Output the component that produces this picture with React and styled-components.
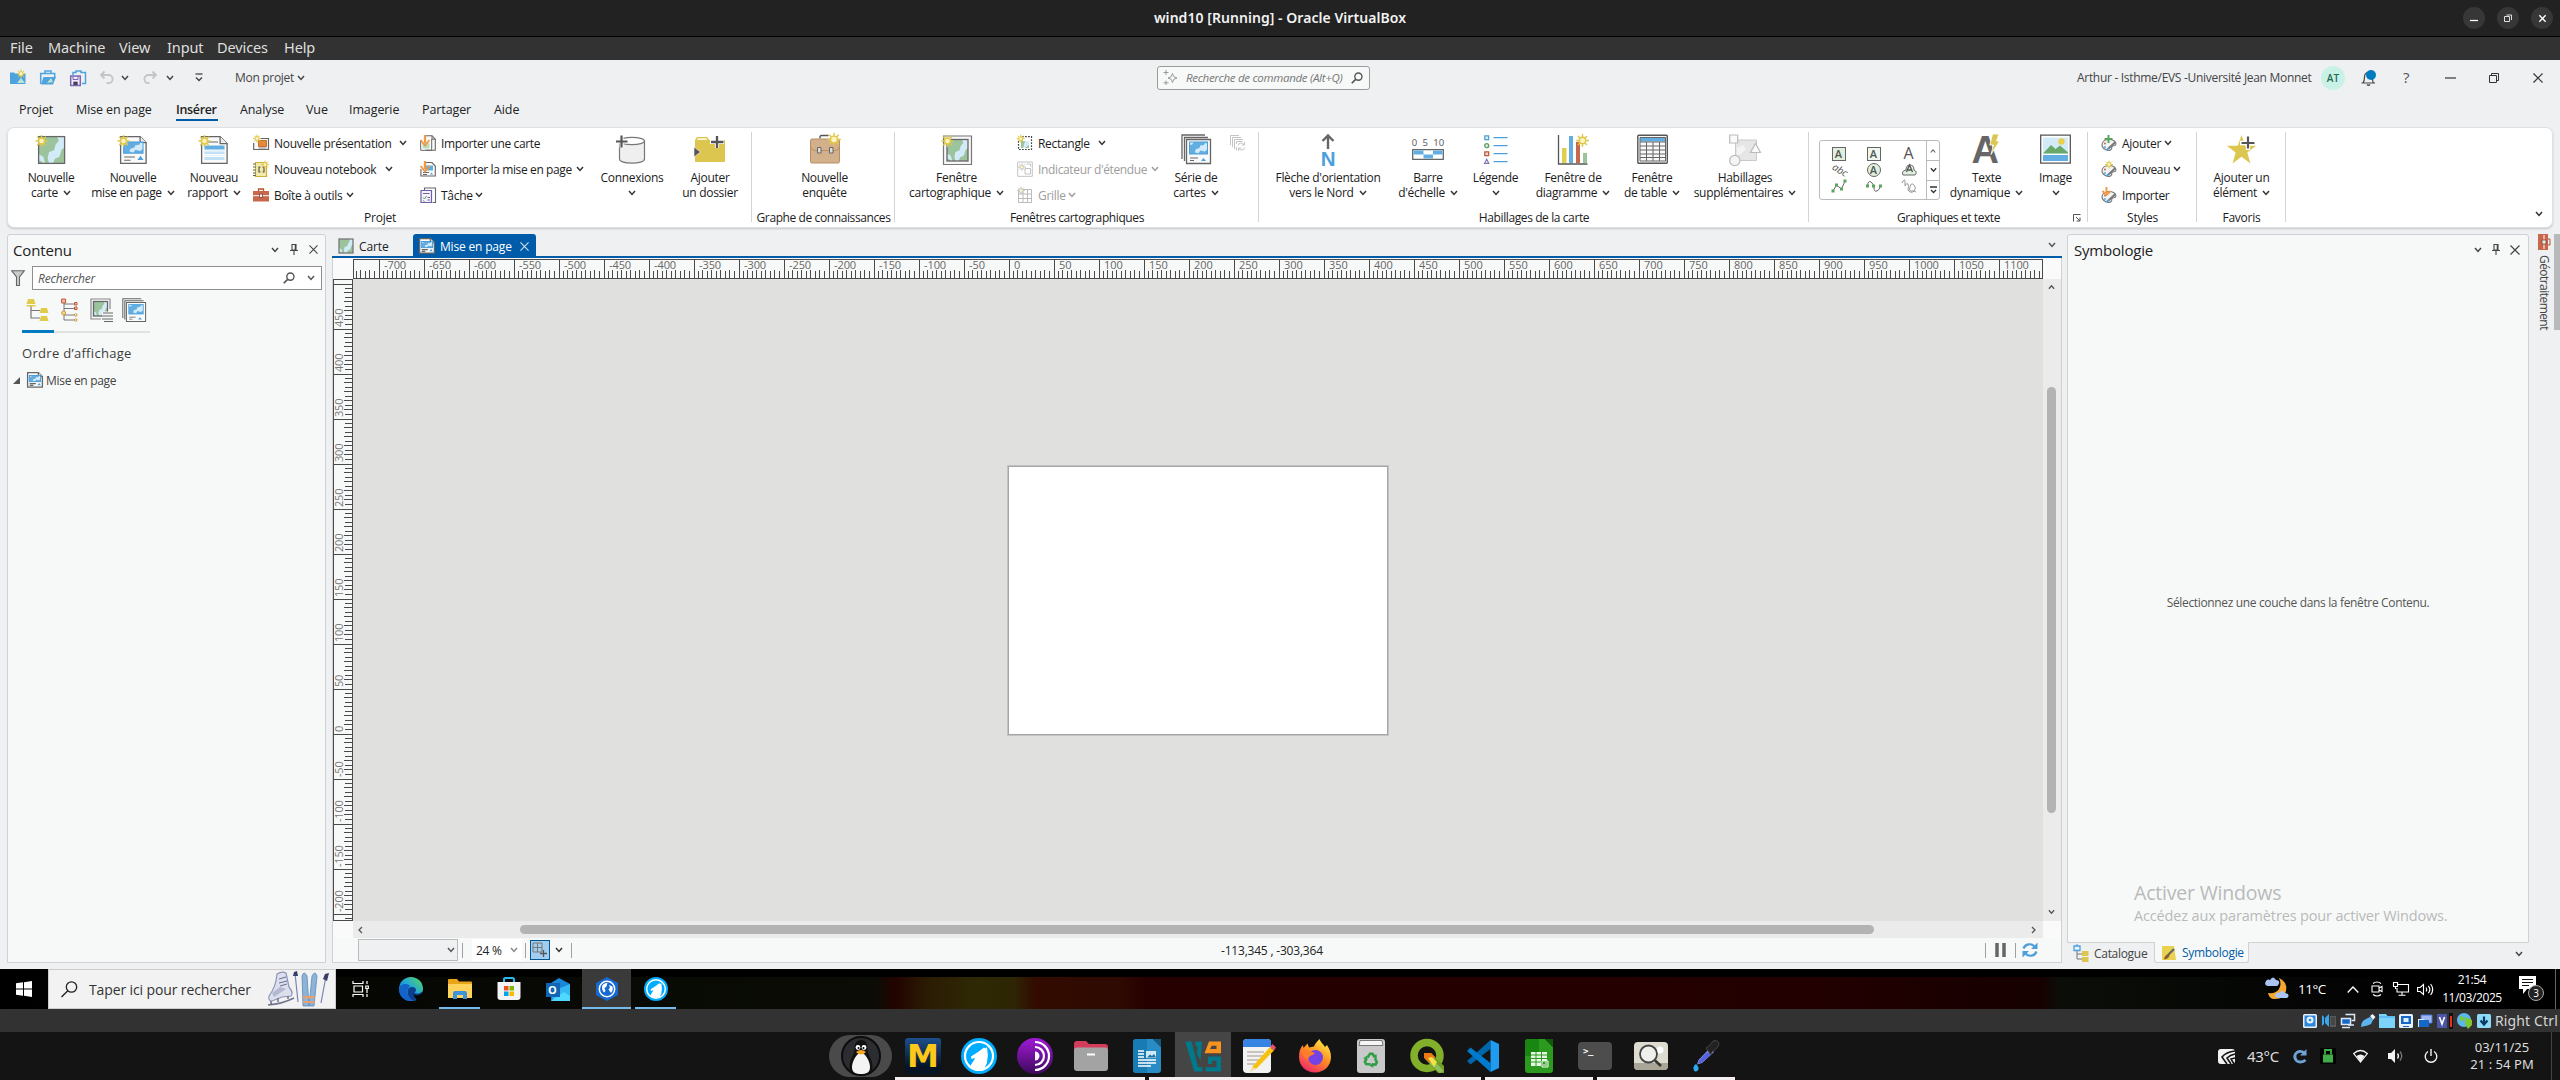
import React from "react";
import styled, { createGlobalStyle } from "styled-components";

const Global = createGlobalStyle`
  * { box-sizing: border-box; }
  body { margin: 0; background: #141414; }
  svg { display: block; flex: none; overflow: visible; }
`;

const ui = `"Open Sans", "Noto Sans", sans-serif`;
const host = `"Noto Sans", "Open Sans", sans-serif`;

/* ---------- shared ---------- */
const Screen = styled.div`
  width: 2560px; height: 1080px; overflow: hidden;
  display: flex; flex-direction: column;
  font-family: ${ui}; font-size: 12px; line-height: 15px; color: #222;
  background: #eef0f2; white-space: nowrap;
`;
const Spacer = styled.div`flex: 1;`;
const Slot = styled.div`
  display: flex; align-items: center; justify-content: center;
  flex: none; width: ${p => p.$w}px; margin-left: ${p => p.$ml || 0}px;
`;
const Label = styled.span`
  flex: none; display: inline-block;
  width: ${p => p.$w ? p.$w + "px" : "auto"};
  margin-left: ${p => p.$ml || 0}px;
  letter-spacing: ${p => p.$ls ?? -0.3}px;
  font-size: ${p => p.$size || 12}px;
  color: ${p => p.$c || "inherit"};
  font-style: ${p => p.$i ? "italic" : "normal"};
`;
const Svg = ({ w = 16, h = w, vb, children }) => (
  <svg width={w} height={h} viewBox={vb || `0 0 ${w} ${h}`} fill="none">{children}</svg>
);
const Chev = ({ c = "#333", up, w = 8 }) => (
  <Svg w={w} h={6} vb="0 0 8 6"><path d={up ? "M1 5l3-3.4L7 5" : "M1 1l3 3.4L7 1"} stroke={c} strokeWidth="1.5" /></Svg>
);
const Close = ({ s = 10, c = "#333", k = 1.2 }) => (
  <Svg w={s} vb="0 0 10 10"><path d="M.5.5l9 9M9.5.5l-9 9" stroke={c} strokeWidth={k} /></Svg>
);
const Pin = () => (
  <Svg w={8} h={11}><path d="M2 .5h4v5.500H2zM0 6.500h8M4 6.500V11M5.300 1v5" stroke="#444" strokeWidth="1.1" /></Svg>
);
const Glass = ({ s = 13, c = "#555" }) => (
  <Svg w={s} vb="0 0 13 13"><circle cx="8" cy="5" r="3.9" stroke={c} strokeWidth="1.5" /><path d="M5 8L.8 12.200" stroke={c} strokeWidth="1.8" /></Svg>
);

/* ---------- icon parts ---------- */
const Sun = ({ x = 5.5, y = 7, r = 3, c = "#e0c84a" }) => (
  <g stroke={c} strokeWidth={r > 2.5 ? 1.4 : 1}>
    <path d={[0, 45, 90, 135].map(a => {
      const t = a * Math.PI / 180, R = r * 2, dx = Math.cos(t) * R, dy = Math.sin(t) * R;
      return `M${x - dx} ${y - dy}L${x + dx} ${y + dy}`;
    }).join("")} />
    <circle cx={x} cy={y} r={r} fill="#fbf3c0" />
  </g>
);
const Land = ({ x, y, w, h, a = "#9cc49c", b = "#d3eaf9", s = "#666" }) => (
  <g>
    <rect x={x} y={y} width={w} height={h} fill={b} />
    <path transform={`translate(${x} ${y}) scale(${w / 10} ${h / 10})`} fill={a} d="M0 0h7l.8 1.500-1.300 1.500-.5 2-2 .8L3.500 8 4 10H2.500L1.800 7.500 0 6.500zM10 4v6H5.500l.8-1.700L8 7.500l.8-2.500zM0 8.800l1.500.6V10H0z" />
    {s && <rect x={x} y={y} width={w} height={h} stroke={s} strokeWidth="1.3" />}
  </g>
);
const Sheet = ({ x = 0, y = 0, w, h, c = 5 }) => (
  <g stroke="#666" strokeWidth="1.3"><path fill="#fafafa" d={`M${x} ${y}h${w - c}l${c} ${c}v${h - c}h${-w}z`} /><path d={`M${x + w - c} ${y}v${c}h${c}`} fill="#eee" /></g>
);
const Sea = ({ x, y, w, h }) => (
  <g><rect x={x} y={y} width={w} height={h} fill="#62aee2" />
    <path transform={`translate(${x} ${y}) scale(${w / 10} ${h / 10})`} fill="#d3eaf9" d="M0 0h2.500L1.500 2 0 2.500zM10 1v5L8.500 8 6 7 5 9.500 3 8.500 3.500 6l2-1L6 3l2-.5L8.500 1z" />
    <rect x={x} y={y} width={w} height={h} stroke="#4d9fdb" /></g>
);
const LayoutArt = ({ x, y, w, h, c }) => (
  <g>
    <Sheet x={x} y={y} w={w} h={h} c={c} />
    <Sea x={x + w * .12} y={y + h * .2} w={w * .76} h={h * .42} />
    <path d={`M${x + w * .14} ${y + h * .76}h${w * .42}M${x + w * .14} ${y + h * .88}h${w * .25}`} stroke="#666" strokeWidth="1.1" />
    <path d={`M${x + w * .66} ${y + h * .87}h${w * .24}l${-w * .12} ${-h * .16}z`} fill="#4d9fdb" />
  </g>
);

const IMapNew = () => <Svg w={30}><Land x={2.600} y={2.600} w={26} h={26.800} /><Sun /></Svg>;
const ILayoutNew = () => <Svg w={30}><LayoutArt x={2.600} y={2.600} w={25.500} h={26.800} c={6} /><Sun /></Svg>;
const IReportNew = () => (
  <Svg w={30}><Sheet x={2.6} y={2.6} w={25.500} h={26.800} c={7} />
    <path d="M9 8h10" stroke="#666" strokeWidth="1" />
    <path d="M5.500 11.500h20v4h-20z" fill="#62aee2" /><path d="M5.500 17.500h20v2.500h-20zM5.500 23h20v3h-20z" fill="#bfe0f5" /><path d="M5.500 16.500h20M5.500 21.500h20" stroke="#e8f4fb" />
    <Sun /></Svg>
);
const IConn = () => (
  <Svg w={32} h={30}><path d="M3.500 7v18c0 5.500 25 5.500 25 0V7" fill="#efefef" stroke="#777" strokeWidth="1.200" /><ellipse cx="16" cy="7" rx="12.500" ry="3.700" fill="#fff" stroke="#777" strokeWidth="1.200" />
    <path d="M5.500 1.500v12M0 7.500h11.500" stroke="#fff" strokeWidth="4" /><path d="M5.500 1.500v12M0 7.500h11.500" stroke="#555" strokeWidth="2.200" /></Svg>
);
const IFolderAdd = () => (
  <Svg w={32} h={30}><path d="M1 6l2-3h10l2.500 3H31v22H1z" fill="#dcc64f" /><path d="M3 6l1-1.700h8L13.500 6z" fill="#fdf8dc" /><path d="M0 13l6.500 5L0 23z" fill="#555" stroke="#fff" strokeWidth=".6" />
    <path d="M23 0v14M16 8h14" stroke="#fff" strokeWidth="4" /><path d="M23 2v12M17 8h12.500" stroke="#555" strokeWidth="2.300" /></Svg>
);
const IBag = () => (
  <Svg w={32} h={30}><path d="M11 4.500V3q0-1.500 1.500-1.500h7" stroke="#555" strokeWidth="1.400" /><rect x="1.500" y="5" width="29" height="24" rx="1.500" fill="#d3b08c" stroke="#b98e60" /><path d="M1.500 12q1 4.500 5 4.500h19q4 0 5-4.500" stroke="#b98e60" /><path d="M8.500 13.500h3.500v5.500H8.500zM20.500 13.500H24v5.500h-3.500z" fill="#ddd" stroke="#666" /><Sun x={25} y={5.500} r={3.400} /></Svg>
);
const IMapFrame = () => <Svg w={31} h={32}><path d="M2.500 2h28v28.500h-28z" fill="#f7f7f7" stroke="#777" strokeWidth="1.200" /><Land x={6} y={5.500} w={21} h={21.500} /><Sun x={6.500} y={7} /></Svg>;
const ISeries = ({ s = 30 }) => (
  <Svg w={s} vb="0 0 30 30"><path d="M1 25V1h23M3.500 27V3.500H27" stroke="#666" strokeWidth="1.300" /><path d="M5.500 5.500h24v24h-24z" fill="#fafafa" stroke="#666" strokeWidth="1.300" /><Sea x={8.500} y={8} w={18} h={12} /><path d="M9 24h8M9 26.500h4" stroke="#666" /><path d="M20 27h5l-2.500-3z" fill="#4d9fdb" /></Svg>
);
const ISeriesRefresh = () => (
  <Svg w={16}><path d="M.5 10V.5H9M2.500 12V2.500H11M4.500 14V4.500H13M6.500 9V6.500h6M6.500 12v3.500" stroke="#c4c4c4" /><path d="M8 10.500a3.400 3.400 0 016-1M15 12.500a3.400 3.400 0 01-6 1M14.500 7v3h-3M8.500 16v-3h3" stroke="#c4c4c4" /></Svg>
);
const North = styled.div`
  display: flex; flex-direction: column; align-items: center; height: 30px;
  color: #4d9fdb; font: 700 20.5px/19px "Liberation Sans", sans-serif;
`;
const INorth = () => <North><Svg w={14} h={15}><path d="M7 2v13M1.500 7L7 1.500 12.500 7" stroke="#666" strokeWidth="2.400" /></Svg>N</North>;
const Scale = styled.div`
  width: 34px; height: 30px; padding-top: 3px; display: flex; flex-direction: column; align-items: center;
  font: 9.5px/12px ${ui}; color: #555; letter-spacing: .1px;
`;
const IScale = () => <Scale><span>0&nbsp; 5 &nbsp;10</span><Svg w={32} h={11}><path d="M.7.7h30.600v9.600H.7z" fill="#fff" stroke="#666" strokeWidth="1.300" /><path d="M1.500 1.500h10v4h-10zM21 1.500h9.500v4H21zM11.500 5.500H21v4h-9.500z" fill="#62aee2" /></Svg></Scale>;
const ILegend = () => (
  <Svg w={24} h={30}><path d="M.8 1.800h3.800v3.800H.8z" stroke="#4d9fdb" strokeWidth="1.300" fill="#dff0fb" /><circle cx="2.700" cy="11.700" r="2" stroke="#5f9e62" strokeWidth="1.300" fill="#d8efd8" /><path d="M.8 17.800h3.800v3.800H.8z" stroke="#c0573b" strokeWidth="1.300" fill="#f8ded6" /><path d="M2.700 25.200L.6 29.300h4.200z" stroke="#8470b8" strokeWidth="1.200" /><path d="M9.500 3.700h14M9.500 11.700h14M9.500 19.700h14M9.500 27.700h14" stroke="#4d9fdb" strokeWidth="1.300" /></Svg>
);
const IChart = () => (
  <Svg w={32} h={31}><path d="M1.500 1v29h29" stroke="#555" strokeWidth="1.300" /><path d="M5 14h4.500v15H5z" fill="#e0cf4e" /><path d="M12 2h4v27h-4z" fill="#62aee2" /><path d="M19 8h4v21h-4z" fill="#c8674a" /><path d="M26 19h4v10h-4z" fill="#9cc49c" /><Sun x={25.500} y={6.500} r={3.200} /></Svg>
);
const ITable = () => (
  <Svg w={31} h={30}><rect x=".8" y="1.300" width="29.500" height="28" rx="1" fill="#fafafa" stroke="#555" strokeWidth="1.400" /><path d="M3 3.500h25.500v4H3z" fill="#62aee2" /><path d="M3 3.500h25.500v23.500H3zM3 8h25.500M3 12h25.500M3 16h25.500M3 20h25.500M3 23.500h25.500M9.500 8v19M16 8v19M22.500 8v19" stroke="#666" /></Svg>
);
const IExtras = () => (
  <Svg w={32} h={32}><path d="M6.500 6h21v20.500h-21z" fill="#e6e6e6" stroke="#c9c9c9" /><path d="M8 14l6-3 3 4-5 5-4 1z" fill="#f4f4f4" /><path d="M.7 1h8v8h-8zM26.500 9.500l5 9h-10z" fill="#fafafa" stroke="#bbb" strokeWidth="1.200" /><circle cx="5.800" cy="26.500" r="5.200" fill="#f4f4f4" stroke="#bbb" strokeWidth="1.200" /></Svg>
);
const BigA = styled.div`
  display: flex; align-items: flex-start; width: 30px; height: 30px; color: #666;
  font: 700 38px/32px "Liberation Sans", sans-serif; letter-spacing: -3px;
  svg { margin-left: -7px; }
`;
const IDynText = () => <BigA>A<Svg w={11} h={21}><path d="M3.500 0H10L7.500 7h3L2 20.500 4.500 11H.8z" fill="#dcc64f" stroke="#fff" strokeWidth=".8" /></Svg></BigA>;
const IImage = () => (
  <Svg w={31} h={30}><path d="M.7 1.200h29.600v28H.7z" fill="#fff" stroke="#555" strokeWidth="1.300" /><path d="M3 3.500h25v16H3z" fill="#d3eaf9" /><path d="M3 19.500L11 11l4.500 4L20 11.500l8 7v1z" fill="#68a86b" /><path d="M3 21h25v6H3z" fill="#62aee2" /><circle cx="21.500" cy="7.500" r="3.200" fill="#e8d04c" /></Svg>
);
const IStar = () => (
  <Svg w={32} h={31}><path d="M15.500 1l3.700 10.800h11l-8.900 6.800 3.200 11-9-6.800-9 6.800 3.200-11L.8 11.800h11z" fill="#dcc64f" /><path d="M22 1.500V16M14 9h15" stroke="#fff" strokeWidth="4.400" /><path d="M22 2.500v12M15.500 9h13" stroke="#555" strokeWidth="2.200" /></Svg>
);

/* small 16px icons */
const ISlides = () => <Svg><path d="M2 3.500h13.500v11H.7V8" stroke="#666" strokeWidth="1.200" fill="#fafafa" /><path d="M5.500 5.500h8v6h-8z" fill="#e38a3b" stroke="#c9702a" /><path d="M5.500 13h8" stroke="#888" /><Sun x={4} y={3.500} r={2} /></Svg>;
const INotebook = () => <Svg><path d="M2.500 1.500h11V15.500h-11z" fill="#f4ebaa" stroke="#c9b23c" strokeWidth="1.200" /><path d="M0 3h3M0 6h3M0 9h3M0 12h3M0 14.500h3" stroke="#666" /><path d="M7.500 6H6v5h1.500M9.500 6H11v5H9.500" stroke="#555" strokeWidth="1.200" /><Sun x={12} y={3.500} r={2} /></Svg>;
const IToolbox = () => <Svg><path d="M5.500 4V2h5v2" stroke="#b5532f" strokeWidth="1.300" /><path d="M0 4h16v10.500H0z" fill="#c8674a" /><path d="M0 8.700h16" stroke="#fff" /><path d="M6.500 7h3v3.500h-3z" fill="#eee" stroke="#6a3322" strokeWidth=".7" /></Svg>;
const OrangeDown = () => <><path d="M5 0v8" stroke="#ee9a48" strokeWidth="2.300" /><path d="M.6 5L5 10.500 9.400 5" stroke="#ee9a48" strokeWidth="1.800" /></>;
const IImportMap = () => <Svg><path d="M6 .7h6l3.300 3.500v11H5.500" stroke="#666" strokeWidth="1.100" fill="#fafafa" /><path d="M12 .7v3.500h3.300M.7 5v10.300h11V4" stroke="#666" /><path d="M2.500 8h7v5.500h-7z" fill="#b9dcc0" /><OrangeDown /></Svg>;
const IImportLayout = () => <Svg><path d="M4 1.500h8l3.300 3.500v10H.9V8" stroke="#666" strokeWidth="1.100" fill="#fafafa" /><path d="M5 4.500h8v5H5z" fill="#62aee2" /><path d="M3 11.500h6M3 13.500h4" stroke="#666" /><path d="M10 13.500h3l-1.500-2z" fill="#4d9fdb" /><OrangeDown /></Svg>;
const ITask = () => <Svg><path d="M4.500 3V1h11v14.500h-3" stroke="#666" strokeWidth="1.100" /><path d="M1 3.500h10.500v12H1z" fill="#f4f1fa" stroke="#6f5fa5" strokeWidth="1.200" /><path d="M3 6.500h6.500" stroke="#6f5fa5" /><path d="M3 10.500l1.500 1.500 2-3M3 13.500l1.500 1" stroke="#5aa45e" /><path d="M7.500 10.500h2.500M7.500 13h2.500" stroke="#6f5fa5" /></Svg>;
const IRect = () => <Svg><path d="M5 1.700h9.500v12.800H1.500V6" stroke="#444" strokeWidth="1.200" strokeDasharray="1.800 1.200" /><path d="M4 6h8v7H4z" fill="#9cc49c" /><path d="M8 6h4v4l-4 3H6z" fill="#d3eaf9" /><Sun x={3.700} y={3.700} r={2} /></Svg>;
const IExtent = () => <Svg><path d="M.7 1h14.600v14.300H.7z" stroke="#c2c2c2" /><path d="M8 7.500h5.500V13H8zM9.500 3h4v2.500" stroke="#c2c2c2" /><Sun x={5} y={6} r={2} c="#ccc" /></Svg>;
const IGrid = () => <Svg><path d="M1.500 2.500h13v13H1.500zM1.500 7h13M1.500 11.500h13M6 3v12.500M10.500 3v12.500" stroke="#bbb" /><Sun x={4} y={3.500} r={2} c="#ccc" /></Svg>;
const Palette = ({ children }) => <Svg><path d="M1 10C1 6.500 4 4.500 8 4.500s7 2 7 4.500-3 1-4 2.500 1 2-1.500 3.500S1 14 1 10z" fill="#f3f3f3" stroke="#777" strokeWidth="1.100" /><path d="M14.500 7l-7 6.500" stroke="#777" strokeWidth="2" /><path d="M8 13l-2.500 2" stroke="#4d9fdb" strokeWidth="2" /><circle cx="4" cy="8.500" r="1" fill="#c8674a" /><circle cx="4" cy="12" r="1" fill="#62aee2" />{children}</Svg>;
const IPalAdd = () => <Palette><path d="M7.500 0v8M3.500 4h8" stroke="#5aa45e" strokeWidth="2" /></Palette>;
const IPalNew = () => <Palette><Sun x={8} y={3.500} r={2} /></Palette>;
const IPalImp = () => <Palette><path d="M5.500 0v7M1.500 4l4 4 4-4" stroke="#ee9a48" strokeWidth="1.900" /></Palette>;

/* ---------- host title + menu ---------- */
const TitleBar = styled.div`
  height: 37px; background: #222; border-bottom: 1px solid #000; flex: none;
  display: grid; grid-template-columns: 1fr auto 1fr; align-items: center;
  color: #f2f2f2; font: 600 14px/20px ${host};
`;
const WinBtns = styled.div`display: flex; justify-content: flex-end; gap: 12px; padding-right: 7px;`;
const WinBtn = styled.div`
  width: 22px; height: 22px; border-radius: 50%; background: #373737;
  display: flex; align-items: center; justify-content: center;
`;
const MenuBar = styled.div`
  height: 23px; background: #323232; flex: none; display: flex; align-items: center;
  padding: 0 0 3px 10px; color: #dfdfdf; font: 14.500px/20px ${host};
`;

/* ---------- application header ---------- */
const QuickBar = styled.div`height: 35px; display: flex; align-items: center; flex: none; padding-left: 10px; color: #444;`;
const Search = styled.div`
  width: 213px; height: 24px; border: 1px solid #9b9b9b; border-radius: 3px; background: #f7f9f8;
  display: flex; align-items: center; flex: none; color: #777; margin-left: ${p => p.$ml}px; padding: 0 6px 0 5px;
`;
const Avatar = styled.div`
  width: 24px; height: 24px; border-radius: 50%; background: #caf1e5; color: #1e6b56; font: 600 10px/24px ${ui}; text-align: center; margin-left: 8px;
`;
const TabsRow = styled.div`height: 28px; display: flex; align-items: flex-start; flex: none; padding-left: 19px; font-size: 12.500px;`;
const RTab = styled.div`
  width: ${p => p.$w}px; margin-right: ${p => p.$mr || 0}px; flex: none; height: 26px; line-height: 30px;
  font-weight: ${p => p.$on ? 600 : 400}; letter-spacing: ${p => p.$ls ?? -0.1}px;
  border-bottom: 2px solid ${p => p.$on ? "#005ca9" : "transparent"};
`;
const Ribbon = styled.div`
  height: 101px; margin: 4px 7px 6px 7px; background: #fff; border: 1px solid #dfe1e3; border-radius: 7px; flex: none;
  box-shadow: 0 1px 2px rgba(0,0,0,.18); display: flex; color: #1c1c1c;
`;
const Group = styled.div`width: ${p => p.$w}px; flex: none; display: flex; flex-direction: column;`;
const GroupRow = styled.div`display: flex; height: 83px; align-items: flex-start;`;
const GroupFoot = styled.div`text-align: center; line-height: 14px; letter-spacing: ${p => p.$ls ?? -0.25}px; font-size: 12px;`;
const FootGrid = styled.div`
  display: grid; grid-template-columns: 1fr auto 1fr; align-items: center; height: 14px;
  & > svg { justify-self: end; margin-right: 7px; }
`;
const Sep = styled.div`width: 1px; height: 90px; margin: 4px 0 0 -1px; background: #d2d4d6; flex: none;`;
const BigBtn = styled.div`
  width: ${p => p.$w}px; margin-left: ${p => p.$ml || 0}px; flex: none; padding-top: 6px;
  display: flex; flex-direction: column; align-items: center; letter-spacing: -0.3px;
`;
const BigIcon = styled.div`height: 30px; margin-bottom: 6px; display: flex; justify-content: center;`;
const BigLine = styled.div`height: 15px; display: flex; align-items: center; gap: 5px;`;
const Small = styled.div`
  width: ${p => p.$w}px; margin-left: ${p => p.$ml || 0}px; padding-top: 2px; flex: none;
`;
const SmallRow = styled.div`
  height: 26px; display: flex; align-items: center; color: ${p => p.$off ? "#9d9d9d" : "inherit"};
`;
const Big = ({ w, ml, icon, a, b, chev = true }) => (
  <BigBtn $w={w} $ml={ml}><BigIcon>{icon}</BigIcon><BigLine>{a}</BigLine><BigLine>{b}{chev && <Chev />}</BigLine></BigBtn>
);
const Item = ({ icon, t, w, off, chev = true, ls }) => (
  <SmallRow $off={off}>{icon}<Label $ml={5} $w={w} $ls={ls}>{t}</Label>{chev && <Chev c={off ? "#9d9d9d" : "#333"} />}</SmallRow>
);
const Gallery = styled.div`
  width: 121px; height: 60px; margin: 12px 0 0 10px; border: 1px solid #b9bbbd; border-radius: 3px; display: flex; flex: none;
`;
const GalleryGrid = styled.div`
  flex: 1; display: grid; grid-template-columns: repeat(3, 35px); grid-auto-rows: 16px; padding: 5px 0 0 1px; place-items: center;
`;
const GalleryBtns = styled.div`width: 13px; border-left: 1px solid #b9bbbd; display: grid; grid-template-rows: 1fr 1fr 1fr;`;
const GalleryBtn = styled.div`display: flex; flex-direction: column; gap: 1px; align-items: center; justify-content: center; border-top: ${p => p.$first ? 0 : 1}px solid #b9bbbd;`;
const Glyph = styled.span`
  font: ${p => p.$rot ? "italic " : ""}${p => p.$b ? 600 : 400} ${p => p.$s || 11}px/12px ${ui}; color: #555;
  width: 14px; height: 14px; text-align: center; display: block;
  border: ${p => p.$box ? 1 : 0}px solid #666; background: ${p => p.$fill || "none"};
  border-radius: ${p => p.$round ? "50%" : 0};
  transform: rotate(${p => p.$rot || 0}deg);
`;
const Collapse = styled.div`flex: 1; display: flex; justify-content: flex-end; align-items: flex-end; padding: 0 9px 10px 0;`;

/* ---------- docked panels ---------- */
const Body = styled.div`height: 735px; display: flex; flex: none; padding-left: 7px; align-items: flex-start;`;
const Panel = styled.div`
  width: ${p => p.$w}px; height: ${p => p.$h}px; flex: none; background: #f7f9f8; border: 1px solid #cfd1d4;
  border-radius: 3px 3px 0 0; display: flex; flex-direction: column;
`;
const PanelHead = styled.div`height: 31px; display: flex; align-items: center; padding: 0 ${p => p.$pr}px 2px ${p => p.$pl}px; gap: ${p => p.$g}px; flex: none;`;
const PanelTitle = styled.div`flex: 1; font-size: 15px; letter-spacing: ${p => p.$ls}px; color: #222; line-height: 20px;`;
const FindRow = styled.div`display: flex; height: 24px; align-items: center; padding-left: 3px; gap: 7px;`;
const FindBox = styled.div`
  width: 290px; height: 24px; border: 1px solid #8f8f8f; background: #fff; display: flex; align-items: center; padding: 0 6px 0 5px;
`;
const ViewTabs = styled.div`display: flex; height: 42px; padding-left: 14px; margin-top: 1px;`;
const ViewTab = styled.div`
  width: 32px; height: 42px; display: flex; align-items: center; justify-content: center; padding: 0 0 2px 0;
  border-bottom: ${p => p.$on ? "3px solid #007ac2" : "2px solid #e0e2e3"};
`;
const Caption = styled.div`padding: 11px 0 0 14px; font-size: 13px; line-height: 18px; color: #3c3c3c; letter-spacing: .3px;`;
const TreeRow = styled.div`display: flex; align-items: center; height: 18px; margin-top: 9px; padding-left: 5px; color: #444;`;

/* ---------- layout view ---------- */
const Center = styled.div`width: 1730px; height: 729px; margin: 0 5px 0 6px; flex: none; display: flex; flex-direction: column;`;
const DocTabs = styled.div`height: 24px; display: flex; border-bottom: 2px solid #005ca9; flex: none;`;
const DocTab = styled.div`
  height: 22px; display: flex; align-items: center; width: ${p => p.$w}px; padding-left: 6px; padding-top: 2px; flex: none;
  background: ${p => p.$on ? "#005ca9" : "none"}; color: ${p => p.$on ? "#fff" : "#222"}; border-radius: 3px 3px 0 0;
`;
const View = styled.div`
  flex: 1; border: 1px solid #cfd1d4; border-top: 0; padding-top: 1px; background: #f7f9f8;
  display: grid; grid-template-columns: 20px 1690px 18px; grid-template-rows: 20px 642px 17px 24px;
`;
const Corner = styled.div`background: #fafafa;`;
const HRuler = styled.div`background: #f7f9f8; border: 1px solid #4a4a4a; display: flex;`;
const HCell = styled.div`
  width: ${p => p.$w}px; height: 18px; flex: none; border-left: ${p => p.$edge ? 0 : 1}px solid #4a4a4a;
  display: flex; flex-direction: column; justify-content: flex-end;
`;
const HNum = styled.span`font: 11px/10px ${ui}; height: 10px; color: #666; padding-left: 4px; letter-spacing: -0.1px;`;
const VRuler = styled.div`background: #f7f9f8; border: 1px solid #4a4a4a; display: flex; flex-direction: column;`;
const VCell = styled.div`
  height: ${p => p.$h}px; flex: none; border-bottom: ${p => p.$edge ? 0 : 1}px solid #4a4a4a; display: flex; justify-content: space-between;
`;
const VNum = styled.span`
  writing-mode: vertical-rl; transform: rotate(180deg); font: 11px/10px ${ui}; color: #777; padding-top: 2px; letter-spacing: -0.2px; width: 10px;
`;
const Canvas = styled.div`background: #e0e0df; padding: 187px 0 0 655px;`;
const Page = styled.div`width: 380px; height: 269px; background: #fff; border: 1px solid #a6a6a6; box-shadow: 0 0 0 1px #c2c2c1;`;
const VScroll = styled.div`background: #ebebeb; display: flex; flex-direction: column; align-items: center; padding: 5px 1px 6px 0; justify-content: space-between;`;
const VThumb = styled.div`width: 9px; height: 426px; border-radius: 5px; background: #b3b3b3;`;
const HScroll = styled.div`background: #ebebeb; display: flex; align-items: center; justify-content: space-between; padding: 0 7px 0 5px;`;
const HThumb = styled.div`width: 1354px; height: 9px; border-radius: 5px; background: #b3b3b3;`;
const Status = styled.div`grid-column: 1 / 4; display: flex; align-items: center; padding-left: 25px;`;
const Combo = styled.div`width: 100px; height: 22px; border: 1px solid #b9bbbd; background: #eef0f2; display: flex; align-items: center; justify-content: flex-end; padding-right: 2px;`;
const VLine = styled.div`width: 1px; height: ${p => p.$h || 15}px; background: ${p => p.$c || "#a0a0a0"}; margin-left: ${p => p.$ml || 0}px; flex: none;`;
const ZoomBox = styled.div`width: 50px; height: 22px; background: #fff; margin-left: 9px; display: flex; align-items: center; padding: 0 4px; justify-content: space-between; color: #222;`;
const Toggle = styled.div`width: 20px; height: 20px; background: #a3cdee; border: 1px solid #00568f; margin: 0 5px 0 4px; display: flex; align-items: center; justify-content: center;`;

const H_VALUES = Array.from({ length: 37 }, (_, i) => -700 + i * 50);
const V_VALUES = Array.from({ length: 14 }, (_, i) => 450 - i * 50);
const MINOR = [4, 8, 13, 17, 22, 26, 31, 35, 40];
const HTicks = ({ from = 0, to = 44 }) => (
  <Svg w={to - from} h={8}><path shapeRendering="crispEdges" stroke="#4a4a4a" d={MINOR.filter(x => x > from && x <= to).map(x => `M${x - from - .5} ${MINOR.indexOf(x) % 2 ? 0 : 1}V8`).join("")} /></Svg>
);
const VTicks = ({ from = 0, to = 44 }) => (
  <Svg w={8} h={to - from}><path shapeRendering="crispEdges" stroke="#4a4a4a" d={MINOR.filter(y => y > from && y <= to).map(y => `M${MINOR.indexOf(y) % 2 ? 0 : 1} ${y - from - .5}H8`).join("")} /></Svg>
);

/* ---------- right column ---------- */
const Right = styled.div`width: 462px; height: 729px; flex: none; display: flex; flex-direction: column;`;
const Empty = styled.div`text-align: center; margin-top: 329px; color: #555; height: 16px;`;
const Watermark = styled.div`margin: 269px 0 0 66px; color: #b8baba;`;
const WmBig = styled.div`font-size: 19.500px; line-height: 26px; letter-spacing: -0.2px;`;
const WmSmall = styled.div`font-size: 14.500px; line-height: 20px; letter-spacing: -0.15px;`;
const DockTabs = styled.div`display: flex; height: 21px;`;
const DockTab = styled.div`
  display: flex; align-items: center; gap: 5px; width: ${p => p.$w}px; padding-left: ${p => p.$on ? 6 : 5}px; height: 21px; color: ${p => p.$on ? "#005ca9" : "#444"};
  background: ${p => p.$on ? "#f7f9f8" : "none"}; border: 1px solid ${p => p.$on ? "#cfd1d4" : "transparent"}; border-top: 0;
  border-radius: 0 0 3px 3px; margin-top: ${p => p.$on ? -1 : 0}px; padding-top: ${p => p.$on ? 1 : 0}px;
`;
const SideTab = styled.div`width: 13px; margin-left: 9px; display: flex; flex-direction: column; align-items: center; gap: 5px;`;
const SideText = styled.div`writing-mode: vertical-rl; color: #444; line-height: 13px; font-size: 12px; letter-spacing: -0.55px;`;
const OuterScroll = styled.div`width: 6px; height: 96px; background: #b8b9bb; margin-left: auto;`;

/* ---------- Windows taskbar ---------- */
const WinBar = styled.div`
  height: 40px; flex: none; display: flex; color: #fff; border-top: 8px solid #000;
  background: linear-gradient(90deg, #000 0, #060703 340px, #0a0c05 875px, #220300 895px, #2b1a03 925px, #2e2904 975px, #2d2504 1015px, #330b00 1035px, #2e0a02 1120px, #260000 1145px, #230000 1800px, #160000 2040px, #0b0e08 2060px, #040504 2300px, #000 2420px);
`;
const WinInner = styled.div`display: flex; height: 40px; margin-top: -8px; flex: 1; align-items: center;`;
const StartSearch = styled.div`
  width: 288px; height: 40px; background: #f2f2f2; border: 1px solid #ccc; display: flex; align-items: center; padding-left: 12px; color: #333; font-size: 14px;
`;
const AppCell = styled.div`
  width: 49px; height: 40px; flex: none; display: flex; align-items: center; justify-content: center; margin-left: ${p => p.$ml || 0}px;
  background: ${p => p.$on ? "linear-gradient(0deg,#76b9ed 2px,#3a3a3a 2px)" : p.$run ? "linear-gradient(#76b9ed,#76b9ed) center bottom / 41px 2px no-repeat" : "none"};
`;
const Clock = styled.div`text-align: center; width: ${p => p.$w}px; margin-left: ${p => p.$ml}px; font-size: ${p => p.$s}px; line-height: ${p => p.$lh || 18}px; letter-spacing: ${p => p.$ls || 0}px; flex: none;`;
const Notif = styled.div`display: flex; align-items: flex-start; width: 26px; height: 26px; margin-left: 15px;`;
const Badge = styled.div`
  width: 16px; height: 16px; border-radius: 50%; border: 1px solid #aaa; background: #222; font: 10px/14px ${ui}; text-align: center; margin: 9px 0 0 -8px; flex: none;
`;

/* ---------- VirtualBox status + host dock ---------- */
const VbBar = styled.div`
  height: 23px; flex: none; background: #323232; display: flex; align-items: center; justify-content: flex-end; padding-right: 2px; gap: 3.200px;
  color: #d6d6d6; font: 14px/20px ${host};
`;
const Host = styled.div`height: 48px; flex: none; background: #141414; display: flex; color: #ddd; font-family: ${host};`;
const Dock = styled.div`width: 909px; margin-left: 826px; display: flex; flex-direction: column;`;
const DockRow = styled.div`height: 45px; display: flex;`;
const DockCell = styled.div`width: 56px; display: flex; align-items: center; justify-content: center; padding-top: 3px; background: ${p => p.$on ? "#454545" : "none"};`;
const TuxPill = styled.div`width: 63px; height: 42px; border-radius: 21px; background: #4a4a4a; margin: 3px 3px 0 3px; display: flex; align-items: center; justify-content: center; flex: none;`;
const Strips = styled.div`height: 3px; display: flex; padding-left: 69px; gap: 4px;`;
const Strip = styled.div`width: ${p => p.$w}px; background: #f5eef2;`;
const Tray = styled.div`flex: 1; display: flex; align-items: center;`;
const MLogo = styled.div`
  width: 36px; height: 36px; border-radius: 3px; background: linear-gradient(#1d4f8c, #061426 80%); color: #fdc818;
  font: 700 32px/37px "DejaVu Sans", sans-serif; text-align: center;
`;

const Wolf = ({ s = 36 }) => (
  <Svg w={s} vb="0 0 36 36"><circle cx="18" cy="18" r="18" fill="#00acff" /><circle cx="18" cy="18" r="14" stroke="#fff" strokeWidth="2.200" /><path d="M9.500 28.500c1-4 4-6 4.500-8.500l-3.500 1-.5-2.500L17 14l6-4.500 1.500 1 1.500-1.500.5 5c1 4-.5 7-.5 11l-2.500 5c-4 2-10 1.500-14-1.500z" fill="#fff" /></Svg>
);
const Tux = () => (
  <Svg w={40}><circle cx="20" cy="20" r="19" fill="#2b2d30" stroke="#0c0c0c" strokeWidth="2" />
    <path d="M20 4c5 0 6.500 4 6.500 9 0 6 5 9 5 18 0 5-4 8-11.500 8S8.500 36 8.500 31c0-9 5-12 5-18 0-5 1.500-9 6.500-9z" fill="#111" />
    <path d="M20 17c4 0 9 8 9 14s-4 7-9 7-9-1-9-7 5-14 9-14z" fill="#f4f4f4" /><circle cx="17" cy="11.500" r="2.400" fill="#fff" /><circle cx="23" cy="11.500" r="2.400" fill="#fff" /><circle cx="17.500" cy="12" r="1" fill="#000" /><circle cx="22.500" cy="12" r="1" fill="#000" /><path d="M15 16q5-4 10 0-5 5-10 0z" fill="#f9a825" /></Svg>
);
const Tor = () => (
  <Svg w={36}><defs><linearGradient id="tor" x1="0" y1="0" x2="0" y2="1"><stop stopColor="#a11ad8" /><stop offset="1" stopColor="#3d0a5c" /></linearGradient></defs><circle cx="18" cy="18" r="18" fill="url(#tor)" /><path d="M18 4a14 14 0 010 28M18 9a9 9 0 010 18" stroke="#fff" strokeWidth="2.200" /><path d="M18 13.500a4.500 4.500 0 010 9z" fill="#fff" /></Svg>
);
const Files = () => <Svg w={34} h={30}><path d="M0 3q0-3 3-3h9l3 3h16q3 0 3 3v8H0z" fill="#d43c5c" /><rect y="6.500" width="34" height="23.500" rx="3" fill="#a3a3a3" /><path d="M13 13.500h8" stroke="#fff" strokeWidth="2" /></Svg>;
const Writer = () => (
  <Svg w={28} h={34}><path d="M3 0h17l8 8v23q0 3-3 3H3q-3 0-3-3V3q0-3 3-3z" fill="#2a8cc4" /><path d="M3 0h11v34H3q-3 0-3-3V3q0-3 3-3z" fill="#0f6fa8" opacity=".6" /><path d="M20 0l8 8V0z" fill="#155a85" /><path d="M5 12h6M5 15h6M5 18h6M5 21h18M5 24h18M5 27h13" stroke="#fff" strokeWidth="1.500" /><path d="M13 12h10v7H13z" fill="#cfe9f8" /><path d="M14 18.500l3-3 2 1.500 2-2 2 3.500z" fill="#1a6fa5" /></Svg>
);
const VBox = () => (
  <Svg w={36} h={31}>
    <path d="M.3.500h6.200L13 26h4.500v4.500H9.200zM10.500.5H17L15.500 19.500 12 13l.5-8h-2zM23 15.500h13v15H20.500v-4.300h11v-6.400H27v3.200h-4z" fill="#00798a" />
    <path fillRule="evenodd" d="M24 .5h12v11.700H19.500zM26.800 4.800l-1.700 3.300h6.400V4.800z" fill="#f7931e" />
  </Svg>
);
const Editor = () => (
  <Svg w={32} h={34}><rect width="28" height="34" rx="4" fill="#f2f2f2" /><path d="M0 4q0-4 4-4h20q4 0 4 4v4H0z" fill="#3584e4" /><path d="M4 13h17M4 17h17M4 21h12M4 25h8" stroke="#bdb7ac" strokeWidth="1.500" /><path d="M9 28L27 8l4 3.500L13 30z" fill="#f5c211" /><path d="M27 8l2.500-3 3.500 3.500-2 3z" fill="#e8526a" /><path d="M9 28l-2.500 5.500L13 30z" fill="#eedcb0" /></Svg>
);
const Firefox = () => (
  <Svg w={34}><defs><linearGradient id="ff" x1=".8" y1="0" x2=".2" y2="1"><stop stopColor="#fff04a" /><stop offset=".45" stopColor="#ff9022" /><stop offset="1" stopColor="#f0206e" /></linearGradient></defs>
    <path d="M17 33.500C8 33.500 1 27 1 18c0-5 1-9 4-12l.5 3 4-4.500 1.500 4 5-1C17 4 20 2 21.500 0c1 3.500 4 5 5.500 8l2-2c2.500 4 4 7.500 4 12 0 9-7 15.500-16 15.500z" fill="url(#ff)" /><circle cx="17.500" cy="18.500" r="7.500" fill="#7542e5" /><path d="M3 11c4-1 8 1 14 3-2 3-7 2-7 7-4-2-6-6-7-10z" fill="#ff7d2a" /></Svg>
);
const Trash = () => <Svg w={28} h={34}><rect width="28" height="34" rx="3" fill="#c9c9c9" /><path d="M3 1.500h22l1 5H2z" fill="#f5f5f5" stroke="#777" /><g transform="translate(14 21)">{[0, 120, 240].map(a => <g key={a} transform={`rotate(${a})`}><path d="M-3.500-2.500L-1-6.200h2.500l2 3" stroke="#2f9e44" strokeWidth="2.600" /><path d="M5.500-6l.3 4.600L1.500-3z" fill="#2f9e44" /></g>)}</g></Svg>;
const Qgis = () => (
  <Svg w={34}><circle cx="17" cy="16.500" r="13" stroke="#82b02a" strokeWidth="7.500" /><path d="M15 14h6l13 13v7h-6L15 20z" fill="#6fa024" /><path d="M14 14h7l4 4-3.500 7-7.500-6z" fill="#ee7913" /><path d="M20 18l14 14-4 2-10-9z" fill="#8fbf5a" /><path d="M18 19l4-1 5 5-3 5z" fill="#f5e04a" /></Svg>
);
const VsCode = () => (
  <Svg w={32}><path d="M23.500 0v9L3.500 24.500 0 21z" fill="#0065a9" /><path d="M23.500 32v-9L3.500 7.500 0 11z" fill="#007acc" /><path d="M23.500 0L32 4v24l-8.500 4z" fill="#1f9cf0" /></Svg>
);
const Calc = () => (
  <Svg w={28} h={34}><path d="M3 0h17l8 8v23q0 3-3 3H3q-3 0-3-3V3q0-3 3-3z" fill="#2c9a1f" /><path d="M0 3q0-3 3-3h11v17H0z" fill="#0f7a0a" opacity=".6" /><path d="M20 0l8 8V0z" fill="#0c5c08" /><path d="M6 13h16v14H6z" fill="#e6f6e2" /><path d="M6 16h16M6 19.500h16M6 23h16M11 13v14M16.500 13v14" stroke="#2c9a1f" /><path d="M17 22h6v6h-6z" fill="#2c9a1f" stroke="#fff" /><path d="M19 27v-2M21 27v-4" stroke="#fff" /></Svg>
);
const Term = styled.div`width: 34px; height: 28px; border-radius: 4px; background: #4d4d4d; color: #fff; font: 700 9px/10px "DejaVu Sans Mono", monospace; padding: 4px 5px; letter-spacing: -0.300px;`;
const Mag = () => <Svg w={34} h={28}><rect width="34" height="28" rx="4" fill="#dedcd0" /><path d="M0 21h34v3q0 4-4 4H4q-4 0-4-4z" fill="#a9a698" /><circle cx="26" cy="8" r="3.500" fill="#fff" /><circle cx="14.500" cy="12" r="8.500" fill="#efefec" stroke="#444" strokeWidth="1.800" /><path d="M21 18.500l6 5.500" stroke="#333" strokeWidth="2.600" /></Svg>;
const Picker = () => <Svg w={28} h={32}><path d="M17 8l4 4L9 23l-5 1.500L5.500 20z" fill="#8f97ee" /><path d="M14 12l4 3-10 8-3 .5 1-3z" fill="#5563e0" /><path d="M13 8l3-2 4-5q4-1.500 5.500 1T24 8l-4.500 3.500-2 3z" fill="#222" stroke="#444" /><path d="M3 24q3 3 2.500 5T3 31.500.5 29 3 24z" fill="#2aa9f5" /></Svg>;

const Edge = () => (
  <Svg w={24}><defs><linearGradient id="eg" x1="0" y1="1" x2="1" y2="0"><stop stopColor="#0c59c0" /><stop offset=".5" stopColor="#1fa3dd" /><stop offset="1" stopColor="#58dd5a" /></linearGradient></defs><circle cx="12" cy="12" r="12" fill="url(#eg)" /><path d="M9 13c0-4 8-4 8 0 0 2-2 2-1 3 3 1.500 6 0 7.500-2-1 5-5 9-10 9.500C9 22 8.500 16 9 13z" fill="#0d3f8f" /><path d="M14 17q4 3 9-1l1-2v8l-6 2z" fill="#080906" /><path d="M0 12c1-6 9-6 11-3-3 2-4 8 1 13l2 1.800C5 25 0 19 0 12z" fill="#1264c8" /></Svg>
);
const Folder = () => <Svg w={24} h={20}><path d="M0 1q0-1 1-1h8l2 2.500h12q1 0 1 1V19H0z" fill="#e8a51a" /><path d="M0 5h24v13q0 1-1 1H1q-1 0-1-1z" fill="#ffd35c" /><path d="M5 20v-6q0-2 2-2h10q2 0 2 2v6h-4v-4H9v4z" fill="#3f92dc" /></Svg>;
const Store = () => <Svg w={24}><path d="M7 5V2.500Q7 1 8.500 1h7Q17 1 17 2.500V5" stroke="#27b8f0" strokeWidth="2" /><path d="M.5 5h23v15q0 3-3 3h-17q-3 0-3-3z" fill="#f4f4f4" /><path d="M7 9h4.500v4.500H7z" fill="#f25022" /><path d="M12.500 9H17v4.500h-4.500z" fill="#7fba00" /><path d="M7 14.500h4.500V19H7z" fill="#00a4ef" /><path d="M12.500 14.500H17V19h-4.500z" fill="#ffb900" /></Svg>;
const OutlookBox = styled.div`width: 24px; height: 23px; display: grid; grid-template: 100% / 100%; & > * { grid-area: 1 / 1; }`;
const OutlookO = styled.div`width: 14px; height: 14px; margin-top: 5px; background: #1066b5; color: #fff; font: 700 11px/14px ${ui}; text-align: center;`;
const Outlook = () => <OutlookBox><Svg w={24} h={23}><path d="M5 5l8-5 11 6v17H5z" fill="#1a86d8" /><path d="M5 14l19-8v17H7z" fill="#35b8f1" /><path d="M5 23l13-9 6 4v5z" fill="#50d9ff" /></Svg><OutlookO>O</OutlookO></OutlookBox>;
const Arc = () => <Svg w={22} h={24}><path d="M11 0l11 6v12l-11 6-11-6V6z" fill="#1668d2" /><circle cx="11" cy="12" r="7.700" fill="#1668d2" stroke="#fff" strokeWidth="1.500" /><path d="M6.500 8q2.500-2.500 5-2l-1 3.500-2 1.500 1 3-1.500 1.500Q5 12 6.500 8zM13 8l3.500 1.500q1 3.500-1.500 6.500l-2.500-3.500 1.500-2z" fill="#fff" /></Svg>;
const SkateArt = () => (
  <Svg w={64} h={36}><path d="M10 3q5-3 9-1l3 14q5 6 2 9l-9 1-10 4q-4 0-3-5Q9 16 10 3z" fill="#dcdfec" stroke="#8f93b5" strokeWidth="1.200" /><path d="M5 22l8-6 6 2-12 8z" fill="#b4b8d0" /><path d="M4 30v3M11 27v4M21 25v3M1 34q14-1 26-7" stroke="#6f738c" strokeWidth="1.500" /><path d="M12 8l7-2M12 12l8-2M13 15l7-2" stroke="#6a6e94" /><path d="M28 2l3 29M59 5l-5 27" stroke="#7a84b8" strokeWidth="1.200" /><path d="M26 5l1-4 3-1 1 5zM56 8l2-5 4-1-2 8z" fill="#3a3d66" /><path d="M35 5q2-6 5 0l2 30h-6zM45 5q3-6 5 0l-3 30h-5z" fill="#8ab4d8" stroke="#5f88b5" strokeWidth=".8" /><path d="M36 25h11.500v2.500H36zM36 30h11.500v2H36z" fill="#e8a070" /></Svg>
);

const W = "#f2f2f2";
const VbIcon = ({ c = "#3a8fe0", children }) => <Svg w={16}><rect x="1" y="1" width="14" height="14" rx="1.500" fill={c} />{children}</Svg>;

export default function App() {
  return (
    <>
      <Global />
      <Screen>
        <TitleBar>
          <span />
          <Label $ls={0.05} $size={14}>wind10 [Running] - Oracle VirtualBox</Label>
          <WinBtns>
            <WinBtn><Svg w={8}><path d="M0 6.500h8" stroke="#fff" strokeWidth="1.300" /></Svg></WinBtn>
            <WinBtn><Svg w={8}><path d="M.5 2.500h5v5h-5zM2.500 1h5v5" stroke="#ddd" /></Svg></WinBtn>
            <WinBtn><Close s={7} c="#fff" k={2} /></WinBtn>
          </WinBtns>
        </TitleBar>
        <MenuBar>
          {[["File", 38], ["Machine", 71], ["View", 48], ["Input", 50], ["Devices", 67], ["Help", 40]].map(([t, w]) => <Label key={t} $w={w} $ls={-0.1} $size={14.5}>{t}</Label>)}
        </MenuBar>

        <QuickBar>
          <Svg><path d="M0 2.500h4.500V14H0zM4 3.500h11.500V14H0V3.500z" fill="#4da3de" /><path d="M7 13l4-5 4 5z" fill="#bfe3d0" /><Sun x={11} y={3.800} r={2.200} /></Svg>
          <Slot $w={16} $ml={14}><Svg><path d="M5 3V1h6v2M.7 14V3.500h14V7" stroke="#4da3de" strokeWidth="1.500" /><path d="M3.500 7H16l-3 7.500H1z" fill="#4da3de" /><path d="M7 13l4-5 2 4z" fill="#bfe3d0" /></Svg></Slot>
          <Slot $w={16} $ml={14}><Svg><path d="M3 5V2.500h3V1h5v1.500h4.500v11H12" stroke="#4da3de" strokeWidth="1.500" /><path d="M.7 6h9.600v9.500H.7z" fill="#efe9f8" stroke="#7c68b2" strokeWidth="1.500" /><path d="M3 6v3.500h5V6M3.500 15v-3h4v3" stroke="#7c68b2" /><path d="M4 12h3v3H4z" fill="#444" /></Svg></Slot>
          <Slot $w={14} $ml={14}><Svg w={14} h={13}><path d="M4.500.5L1 4l3.500 3.500M1 4h7.500a4 4 0 010 8.200H6.500" stroke="#c3c5c7" strokeWidth="1.800" /></Svg></Slot>
          <Slot $w={8} $ml={7}><Chev c="#444" /></Slot>
          <Slot $w={14} $ml={14}><Svg w={14} h={13}><path d="M9.500.5L13 4 9.500 7.500M13 4H5.500a4 4 0 000 8.200h1" stroke="#c3c5c7" strokeWidth="1.800" /></Svg></Slot>
          <Slot $w={8} $ml={9}><Chev c="#444" /></Slot>
          <Slot $w={8} $ml={21}><Svg w={8} h={9}><path d="M.5 1h7" stroke="#444" strokeWidth="1.300" /><path d="M1 4.500l3 3 3-3" stroke="#444" strokeWidth="1.400" /></Svg></Slot>
          <Label $ml={32} $w={62}>Mon projet</Label><Chev c="#444" />
          <Search $ml={852}>
            <Svg w={15}><path d="M9.500 3.500l1.300 3.200 3.200 1.300-3.200 1.300-1.300 3.200-1.300-3.200L5 8l3.200-1.300zM3 0v5M.5 2.500h5M3 10.500v4.500M.5 12.800h5" stroke="#999" /></Svg>
            <Label $ml={8} $w={165} $i $size={11.5} $ls={-0.3}>Recherche de commande (Alt+Q)</Label>
            <Glass s={12} />
          </Search>
          <Label $ml={707} $w={236}>Arthur - Isthme/EVS -Université Jean Monnet</Label>
          <Avatar>AT</Avatar>
          <Slot $w={16} $ml={15}><Svg w={16}><path d="M1.500 13H15M3 13q1.500-2 1.500-6t4-5 4 5 1.500 6M7 14.500q1.500 1.500 3 0" stroke="#444" strokeWidth="1.200" /><circle cx="11" cy="5" r="5" fill="#007ac2" /></Svg></Slot>
          <Slot $w={14} $ml={23}><Label $size={15} $c="#555">?</Label></Slot>
          <Slot $w={11} $ml={32}><Svg w={11} h={2}><path d="M0 1h11" stroke="#333" strokeWidth="1.200" /></Svg></Slot>
          <Slot $w={10} $ml={33}><Svg w={10}><path d="M.5 2.500h7v7h-7zM2.500 2.500v-2h7v7h-2" stroke="#333" /></Svg></Slot>
          <Slot $w={10} $ml={34}><Close /></Slot>
        </QuickBar>

        <TabsRow>
          <RTab $w={34} $mr={23}>Projet</RTab><RTab $w={80} $mr={20}>Mise en page</RTab>
          <RTab $w={42} $mr={22} $on $ls={-0.35}>Insérer</RTab><RTab $w={44} $mr={22}>Analyse</RTab>
          <RTab $w={22} $mr={21}>Vue</RTab><RTab $w={51} $mr={22}>Imagerie</RTab>
          <RTab $w={50} $mr={22}>Partager</RTab><RTab $w={27}>Aide</RTab>
        </TabsRow>

        <Ribbon>
          <Group $w={744}>
            <GroupRow>
              <Big w={70} ml={8} icon={<IMapNew />} a="Nouvelle" b="carte" />
              <Big w={94} icon={<ILayoutNew />} a="Nouvelle" b="mise en page" />
              <Big w={68} icon={<IReportNew />} a="Nouveau" b="rapport" />
              <Small $w={162} $ml={5}>
                <Item icon={<ISlides />} t="Nouvelle présentation" w={125} />
                <Item icon={<INotebook />} t="Nouveau notebook" w={111} />
                <Item icon={<IToolbox />} t="Boîte à outils" w={72} />
              </Small>
              <Small $w={171} $ml={5}>
                <Item icon={<IImportMap />} t="Importer une carte" w={110} chev={false} ls={-0.38} />
                <Item icon={<IImportLayout />} t="Importer la mise en page" w={135} ls={-0.38} />
                <Item icon={<ITask />} t="Tâche" w={34} />
              </Small>
              <Big w={80} ml={1} icon={<IConn />} a="Connexions" />
              <Big w={76} icon={<IFolderAdd />} a="Ajouter" b="un dossier" chev={false} />
            </GroupRow>
            <GroupFoot>Projet</GroupFoot>
          </Group>
          <Sep />
          <Group $w={143}>
            <GroupRow><Big w={143} ml={1} icon={<IBag />} a="Nouvelle" b="enquête" chev={false} /></GroupRow>
            <GroupFoot $ls={-0.4}>Graphe de connaissances</GroupFoot>
          </Group>
          <Sep />
          <Group $w={364}>
            <GroupRow>
              <Big w={113} ml={5} icon={<IMapFrame />} a="Fenêtre" b="cartographique" />
              <Small $w={149} $ml={4}>
                <Item icon={<IRect />} t="Rectangle" w={60} />
                <Item icon={<IExtent />} t="Indicateur d'étendue" w={113} off ls={-0.36} />
                <Item icon={<IGrid />} t="Grille" w={30} off />
              </Small>
              <Big w={60} icon={<ISeries />} a="Série de" b="cartes" />
              <Small $w={20} $ml={4}><SmallRow><ISeriesRefresh /></SmallRow></Small>
            </GroupRow>
            <GroupFoot $ls={-0.4}>Fenêtres cartographiques</GroupFoot>
          </Group>
          <Sep />
          <Group $w={550}>
            <GroupRow>
              <Big w={116} ml={11} icon={<INorth />} a="Flèche d'orientation" b="vers le Nord" />
              <Big w={84} icon={<IScale />} a="Barre" b="d'échelle" />
              <Big w={51} icon={<ILegend />} a="Légende" />
              <Big w={104} icon={<IChart />} a="Fenêtre de" b="diagramme" />
              <Big w={54} icon={<ITable />} a="Fenêtre" b="de table" />
              <Big w={112} ml={10} icon={<IExtras />} a="Habillages" b="supplémentaires" />
            </GroupRow>
            <GroupFoot $ls={-0.4}>Habillages de la carte</GroupFoot>
          </Group>
          <Sep />
          <Group $w={279}>
            <GroupRow>
              <Gallery>
                <GalleryGrid>
                  <Glyph $box $fill="#dff0df" $b>A</Glyph>
                  <Glyph $box $fill="#eef7ee" $b>A</Glyph>
                  <Glyph $s={16}>A</Glyph>
                  <Glyph $rot={30} $s={10}>abc</Glyph>
                  <Glyph $box $fill="#dff0df" $b $round>A</Glyph>
                  <Svg w={16} h={14}><path d="M2 12q-2-4 3-5 0-5 4-5t4 5q4 2 1 5z" fill="#dff0df" stroke="#666" /><path d="M5.500 9L8.500 2l3 7M6.500 7h4" stroke="#555" strokeWidth="1.300" /></Svg>
                  <Svg w={16} h={14}><path d="M2 12l3.500-6 5 4L14 2" stroke="#666" /><path d="M.5 10.500h3v3h-3zM4 4.500h3v3H4zM9 8.500h3v3H9zM12.500.5h3v3h-3z" fill="#5aa45e" /></Svg>
                  <Svg w={16} h={14}><path d="M1.500 7Q2 1 5 3t3 6 3 3 3.500-6" stroke="#666" /><path d="M0 5.500h3v3H0zM6 5.500h3v3H6zM13 5.500h3v3h-3z" fill="#5aa45e" /></Svg>
                  <Svg w={16} h={14}><path d="M1 4q3-6 3-1T4 7q2-4 3-2t0 6q3 4 6 1t0-6-4 2 1 4 5 1" stroke="#999" /></Svg>
                </GalleryGrid>
                <GalleryBtns>
                  <GalleryBtn $first><Chev w={6} up c="#666" /></GalleryBtn>
                  <GalleryBtn><Chev w={7} /></GalleryBtn>
                  <GalleryBtn><Svg w={7} h={8}><path d="M0 1h7M1 4l2.500 2.500L6 4" stroke="#333" strokeWidth="1.300" /></Svg></GalleryBtn>
                </GalleryBtns>
              </Gallery>
              <Big w={87} ml={3} icon={<IDynText />} a="Texte" b="dynamique" />
              <Big w={51} icon={<IImage />} a="Image" />
            </GroupRow>
            <FootGrid>
              <span />
              <GroupFoot $ls={-0.4}>Graphiques et texte</GroupFoot>
              <Svg w={8}><path d="M7.500.5H.5v7M3 3l4 4M7 3.500V7H3.500" stroke="#555" /></Svg>
            </FootGrid>
          </Group>
          <Sep />
          <Group $w={109}>
            <GroupRow>
              <Small $w={90} $ml={13}>
                <Item icon={<IPalAdd />} t="Ajouter" w={42} />
                <Item icon={<IPalNew />} t="Nouveau" w={51} />
                <Item icon={<IPalImp />} t="Importer" w={50} chev={false} />
              </Small>
            </GroupRow>
            <GroupFoot>Styles</GroupFoot>
          </Group>
          <Sep />
          <Group $w={89}>
            <GroupRow><Big w={89} icon={<IStar />} a="Ajouter un" b="élément" /></GroupRow>
            <GroupFoot>Favoris</GroupFoot>
          </Group>
          <Sep />
          <Collapse><Chev /></Collapse>
        </Ribbon>

        <Body>
          <Panel $w={319} $h={729}>
            <PanelHead $pr={7} $pl={5} $g={11}>
              <PanelTitle $ls={-0.15}>Contenu</PanelTitle>
              <Chev c="#444" /><Pin /><Close s={9} c="#444" />
            </PanelHead>
            <FindRow>
              <Svg w={14} h={16}><path d="M.7.7h12.600L8.500 7v8.500h-3V7z" fill="#c9cacb" stroke="#666" strokeWidth="1.100" /></Svg>
              <FindBox><Label $i $ls={-0.2} $c="#555">Rechercher</Label><Spacer /><Glass s={12} /><Slot $w={8} $ml={12}><Chev c="#555" /></Slot></FindBox>
            </FindRow>
            <ViewTabs>
              <ViewTab $on><Svg w={24}><path d="M5 8v12h9M5 12.500h9" stroke="#777" strokeWidth="1.200" /><path d="M2 1h6l1.500 5h-9zM.5 7h9v1.500h-9zM15 10h6l1.500 5h-9zM15 18h6l1.500 5h-9z" fill="#e0cc48" /></Svg></ViewTab>
              <ViewTab><Svg w={18} h={24}><path d="M3 6h10M3 5v17h10M3 10.500h10M3 17h10" stroke="#777" /><path d="M.6 1h4v4h-4zM13.500 4.500h2.500V7h-2.500zM13.500 9h2.500v2.500h-2.500z" fill="#f3b9a6" stroke="#c0573b" /><circle cx="2.700" cy="15" r="2" fill="#f6d896" stroke="#c99a35" /><circle cx="14.700" cy="17" r="1.300" stroke="#c99a35" /><circle cx="14.700" cy="22" r="1.300" stroke="#c99a35" /></Svg></ViewTab>
              <ViewTab><Svg w={24}><path d="M11 21H1V1h19v10" stroke="#888" strokeWidth="1.200" /><Land x={3.500} y={3.500} w={14} h={14.500} /><path d="M12 13.500h11v10H12z" fill="#f7f9f8" /><path d="M13 15h10M12 18h11M12 21h11M14 23.500h9" stroke="#666" strokeWidth="1.200" /></Svg></ViewTab>
              <ViewTab><ISeries s={24} /></ViewTab>
            </ViewTabs>
            <Caption>Ordre d’affichage</Caption>
            <TreeRow><Svg w={7}><path d="M7 0v7H0z" fill="#555" /></Svg><Slot $w={16} $ml={7}><Svg><LayoutArt x={.6} y={.6} w={14.800} h={14.500} c={4} /></Svg></Slot><Label $ml={3}>Mise en page</Label></TreeRow>
          </Panel>

          <Center>
            <DocTabs>
              <DocTab $w={81}><Svg w={16}><Land x={1} y={1} w={14} h={14} s="#777" /></Svg><Label $ml={5} $ls={-0.1}>Carte</Label></DocTab>
              <DocTab $w={123} $on><Svg w={16}><LayoutArt x={.6} y={.6} w={14.800} h={14.500} c={4} /></Svg><Label $ml={5} $w={80} $ls={-0.18}>Mise en page</Label><Close s={9} c="#cfe2f2" /></DocTab>
              <Spacer /><Slot $w={20}><Chev c="#555" /></Slot>
            </DocTabs>
            <View>
              <Corner />
              <HRuler>
                <HCell $w={25} $edge><HTicks from={19} /></HCell>
                {H_VALUES.map((n, i) => (
                  <HCell key={n} $w={i === H_VALUES.length - 1 ? 43 : 45}>
                    <HNum>{n}</HNum>
                    <HTicks to={i === H_VALUES.length - 1 ? 42 : 44} />
                  </HCell>
                ))}
              </HRuler>
              <Corner />
              <VRuler>
                <VCell $h={5}><span /><VTicks from={40} /></VCell>
                {V_VALUES.map(n => (
                  <VCell key={n} $h={45}><VNum>{n}</VNum><VTicks /></VCell>
                ))}
                <VCell $h={5} $edge><span /><VTicks to={5} /></VCell>
              </VRuler>
              <Canvas><Page /></Canvas>
              <VScroll><Chev w={7} up c="#555" /><VThumb /><Chev w={7} c="#555" /></VScroll>
              <Corner />
              <HScroll>
                <Svg w={5} h={8}><path d="M4 1L1 4l3 3" stroke="#555" strokeWidth="1.300" /></Svg>
                <HThumb />
                <Svg w={5} h={8}><path d="M1 1l3 3-3 3" stroke="#555" strokeWidth="1.300" /></Svg>
              </HScroll>
              <Corner />
              <Status>
                <Combo><Chev c="#555" /></Combo><VLine $ml={4} />
                <ZoomBox><Label>24 %</Label><Chev c="#888" /></ZoomBox><VLine $ml={3} />
                <Toggle><Svg w={16}><path d="M1 1h9v9H1zM5.500 1v9M1 5.500h9" stroke="#777" /><path d="M11.500 8v7M8 11.500h7" stroke="#555" strokeWidth="1.300" /></Svg></Toggle>
                <Chev /><VLine $ml={8} />
                <Label $ml={649} $ls={-0.2} $w={97}>-113,345 , -303,364</Label>
                <Spacer />
                <VLine /><Slot $w={11} $ml={9}><Svg w={11} h={14}><path d="M2 0v14M9 0v14" stroke="#666" strokeWidth="3.500" /></Svg></Slot><VLine $ml={9} />
                <Slot $w={16} $ml={6}><Svg w={16}><path d="M1.500 6.500a6.500 6.500 0 0111-2M14.500 9.500a6.500 6.500 0 01-11 2" stroke="#4d9fdb" strokeWidth="2.200" /><path d="M15.500.5V7H9zM.5 15.500V9H7z" fill="#4d9fdb" /></Svg></Slot>
                <Slot $w={23} />
              </Status>
            </View>
          </Center>

          <Right>
            <Panel $w={462} $h={709}>
              <PanelHead $pr={8} $pl={6} $g={10}>
                <PanelTitle $ls={-0.2}>Symbologie</PanelTitle>
                <Chev c="#444" /><Pin /><Close s={10} c="#444" />
              </PanelHead>
              <Empty><Label $ls={-0.35}>Sélectionnez une couche dans la fenêtre Contenu.</Label></Empty>
              <Watermark><WmBig>Activer Windows</WmBig><WmSmall>Accédez aux paramètres pour activer Windows.</WmSmall></Watermark>
            </Panel>
            <DockTabs>
              <DockTab $w={87}><Svg w={16} h={18}><path d="M4 6v9h5M4 10h5" stroke="#777" /><path d="M1 2h6v4.500H1z" fill="#e5f3fc" stroke="#4d9fdb" strokeWidth="1.300" /><path d="M3 1h2" stroke="#4d9fdb" /><path d="M9 7h6.500v5H9zM9 13h6.500v5H9z" fill="#dcc64f" /></Svg><Label>Catalogue</Label></DockTab>
              <DockTab $w={95} $on><Svg w={16}><path d="M1 1h12l2 14H1z" fill="#e8d24f" /><path d="M13 4L7 10" stroke="#666" strokeWidth="2.200" /><path d="M7.500 9q-4 1-4.500 5.500 4.500-.5 5.500-4z" fill="#8a5a33" /></Svg><Label>Symbologie</Label></DockTab>
              <Spacer /><Slot $w={20}><Chev c="#444" /></Slot>
            </DockTabs>
          </Right>
          <SideTab>
            <Svg w={13} h={16}><path d="M0 0h10v16H0z" fill="#c8674a" /><path d="M6 1v14" stroke="#fff" /><path d="M4 6h4v4H4z" fill="#eee" stroke="#6a3322" strokeWidth=".7" /><path d="M10 5h2v6h-2" stroke="#b5532f" /></Svg>
            <SideText>Géotraitement</SideText>
          </SideTab>
          <OuterScroll />
        </Body>

        <WinBar>
          <WinInner>
            <Slot $w={48}><Svg w={16}><path d="M0 2.300L7 1.300V7.500H0zM8 1.200L16 0v7.500H8zM0 8.500h7v6.200l-7-1zM8 8.500h8V16l-8-1.200z" fill="#fff" /></Svg></Slot>
            <StartSearch>
              <Svg w={17}><circle cx="10.500" cy="6" r="5.200" stroke="#222" strokeWidth="1.300" /><path d="M6.800 9.800L.5 16" stroke="#222" strokeWidth="1.400" /></Svg>
              <Label $ml={11} $w={178} $size={14} $ls={-0.12}>Taper ici pour rechercher</Label><SkateArt />
            </StartSearch>
            <AppCell><Svg w={16}><path d="M0 0v2.500h10V0M0 16v-2.500h10V16M1 5h8.500v6H1zM14 0v3M14 13v3M12.800 5h2.500v2.500h-2.500zM14 8v4" stroke="#fff" strokeWidth="1.200" /></Svg></AppCell>
            <AppCell $ml={1}><Edge /></AppCell>
            <AppCell $run><Folder /></AppCell>
            <AppCell><Store /></AppCell>
            <AppCell><Outlook /></AppCell>
            <AppCell $on><Arc /></AppCell>
            <AppCell $run><Wolf s={24} /></AppCell>
            <Spacer />
            <Svg w={24}><path d="M14 1q9 4 7 13T8 22Q4 21 3 16q8 1 11-4t0-11z" fill="#f5a732" /><path d="M3 9q-4-.5-2.500-4T5 3q3-5 6 0 4 .5 3 3.500T11 9zM13 21q-4-.5-2.500-3.500T14 16q3-4 6 0 4 .5 3.500 3T21 21z" fill="#a9c4f5" /></Svg>
            <Label $ml={9} $w={30} $size={13.5} $ls={-0.5}>11°C</Label>
            <Slot $w={14} $ml={18}><Svg w={12} h={7}><path d="M.7 6.500L6 1l5.300 5.500" stroke="#fff" strokeWidth="1.300" /></Svg></Slot>
            <Slot $w={14} $ml={10}><Svg w={12} h={16}><path d="M1 5h7v6H1zM8 7l3-1.500v5L8 9M2 2.500q4-3 8 0M2 13.500q4 3 8 0" stroke="#fff" strokeWidth="1.100" /></Svg></Slot>
            <Slot $w={18} $ml={8}><Svg w={16} h={14}><path d="M5 2.500h10.500v7.500H4V6M9 10v3M5.500 13.300h7M.5.500h4v4h-4zM2.500 4.500V7" stroke="#fff" strokeWidth="1.100" /></Svg></Slot>
            <Slot $w={18} $ml={6}><Svg w={17} h={13}><path d="M.6 4.500h2.600L6.500 1.500v10L3.200 8.500H.6zM9 4.500q1.500 2 0 4M11.300 2.800q3 3.700 0 7.400M13.600 1q4.200 5.500 0 11" stroke="#fff" strokeWidth="1.100" /></Svg></Slot>
            <Clock $w={64} $ml={6} $s={12} $ls={-0.4}>21:54<br />11/03/2025</Clock>
            <Notif><Svg w={17} h={19}><path d="M0 0h17v13H8l-4 5v-5H0z" fill="#fff" /><path d="M3 3.500h11M3 6.500h11M3 9.500h7" stroke="#111" strokeWidth="1.200" /></Svg><Badge>3</Badge></Notif>
            <VLine $h={40} $c="#666" $ml={10} /><Slot $w={4} />
          </WinInner>
        </WinBar>

        <VbBar>
          <VbIcon c="#e6f2fb"><rect x="2.500" y="2.500" width="11" height="11" fill="#2f86d8" /><circle cx="8" cy="7" r="3.500" fill="#e6f2fb" /><circle cx="8" cy="7" r="1.300" fill="#2f86d8" /></VbIcon>
          <Svg w={16}><path d="M1 2l2 2v7l-2 2zM4 5l4-4v13L4 10z" fill="#39a7ee" /><path d="M9 3h6v11H9z" fill="#5a5a5a" /><path d="M10 5h4M10 7h4M10 9h4M10 11h4" stroke="#333" /></Svg>
          <Svg w={16}><path d="M5.500 1.500h9v6h-3M8 12h6" stroke="#dce9f5" strokeWidth="1.500" /><path d="M1.500 5.500h9v6h-9z" fill="#1668c8" stroke="#dce9f5" strokeWidth="1.500" /><path d="M2 14.500h8" stroke="#dce9f5" strokeWidth="1.500" /></Svg>
          <Svg w={16}><path d="M1 14q0-6 5-8l4-2 3 3-2 4q-4 2-6 2z" fill="#5db4ee" /><path d="M10 3l2.500-2L15.500 4 13 7z" fill="#e9f4fb" /></Svg>
          <Svg w={16}><path d="M0 1h7l1.500 2H16v12H0z" fill="#7cd2f9" /><path d="M0 4h16" stroke="#39a7ee" /></Svg>
          <VbIcon c="#e6f2fb"><path d="M3 3h10v8H3z" fill="#1668c8" /><path d="M5.500 5h5v4h-5z" fill="#dceefb" /><path d="M5 13.500h6" stroke="#1668c8" /></VbIcon>
          <Svg w={16}><path d="M4 2h11v8H4z" fill="#9fb8f5" stroke="#4a74d8" /><path d="M1 6h6v8H1z" fill="#dce9f5" /><path d="M2 7h10v7H2z" fill="#1668c8" /></Svg>
          <Svg w={17} h={16}><path d="M1 1h10v14H1z" fill="#4a55a8" /><path d="M3.500 4L6 11l2.500-7" stroke="#fff" strokeWidth="1.600" /><path d="M13 0h4v16h-4z" fill="#111" /><path d="M14 3h2v11h-2z" fill="#e8321e" /></Svg>
          <Svg w={16}><circle cx="7" cy="7" r="7" fill="#59b7ee" /><path d="M3 3q4 0 4 4-3 2-4 0zM8 4l7 3v5l-4 4-3-5z" fill="#7ec832" /></Svg>
          <VbIcon c="#8edaf7"><path d="M8 3.500v7M4.500 7.500L8 11.500l3.500-4" stroke="#0b3a66" strokeWidth="2.200" /></VbIcon>
          <Label $size={14} $ls={0.15}>Right Ctrl</Label>
        </VbBar>

        <Host>
          <Dock>
            <DockRow>
              <TuxPill><Tux /></TuxPill>
              <DockCell><MLogo>M</MLogo></DockCell>
              <DockCell><Wolf /></DockCell>
              <DockCell><Tor /></DockCell>
              <DockCell><Files /></DockCell>
              <DockCell><Writer /></DockCell>
              <DockCell $on><VBox /></DockCell>
              <DockCell><Editor /></DockCell>
              <DockCell><Firefox /></DockCell>
              <DockCell><Trash /></DockCell>
              <DockCell><Qgis /></DockCell>
              <DockCell><VsCode /></DockCell>
              <DockCell><Calc /></DockCell>
              <DockCell><Term>&gt;_</Term></DockCell>
              <DockCell><Mag /></DockCell>
              <DockCell><Picker /></DockCell>
            </DockRow>
            <Strips><Strip $w={250} /><Strip $w={332} /><Strip $w={108} /><Strip $w={138} /></Strips>
          </Dock>
          <Tray>
            <Slot $w={17} $ml={483}><Svg w={17} h={15}><rect width="17" height="15" rx="3" fill={W} /><path d="M17 2Q8 3 4 8l5 7M17 5q-5 1-8 4l4 6M17 9l-4 1 3 5" stroke="#141414" strokeWidth="1.600" /></Svg></Slot>
            <Label $ml={12} $w={35} $size={15} $ls={-0.3}>43°C</Label>
            <Slot $w={14} $ml={11}><Svg w={14} h={15}><path d="M12 5.500A5.300 5.300 0 107.500 13q3 0 5-2" stroke="#6fa3d6" strokeWidth="3" /><path d="M13.500 0v6.500H7z" fill="#6fa3d6" /></Svg></Slot>
            <Slot $w={16} $ml={13}><Svg w={16}><path d="M0 0h16v16H0z" fill="#000" /><path d="M3 6.500h10v8H3z" fill="#3fae49" /><path d="M5 6.500V2h6v4.500" stroke="#3fae49" strokeWidth="1.800" /></Svg></Slot>
            <Slot $w={16} $ml={16}><Svg w={15} h={13}><path d="M.7 3.500Q7.500-2.500 14.300 3.500L7.500 12z" stroke={W} strokeWidth="1.200" /><path d="M3.500 6q4-3 8 0l-4 6z" fill={W} /></Svg></Slot>
            <Slot $w={16} $ml={19}><Svg w={15} h={14}><path d="M0 4h3l4-4v14l-4-4H0z" fill={W} /><path d="M9.500 4.500q2 2.500 0 5" stroke={W} strokeWidth="1.300" /><path d="M12 2.500q3.500 4.500 0 9" stroke="#777" strokeWidth="1.300" /></Svg></Slot>
            <Slot $w={14} $ml={21}><Svg w={14}><path d="M4 2.500a5.800 5.800 0 106 0M7 0v7" stroke={W} strokeWidth="1.400" /></Svg></Slot>
            <Clock $w={70} $ml={29} $s={13} $ls={0.05} $lh={17}>03/11/25<br />21 : 54 PM</Clock>
            <VLine $h={48} $c="#444" $ml={14} />
          </Tray>
        </Host>
      </Screen>
    </>
  );
}
